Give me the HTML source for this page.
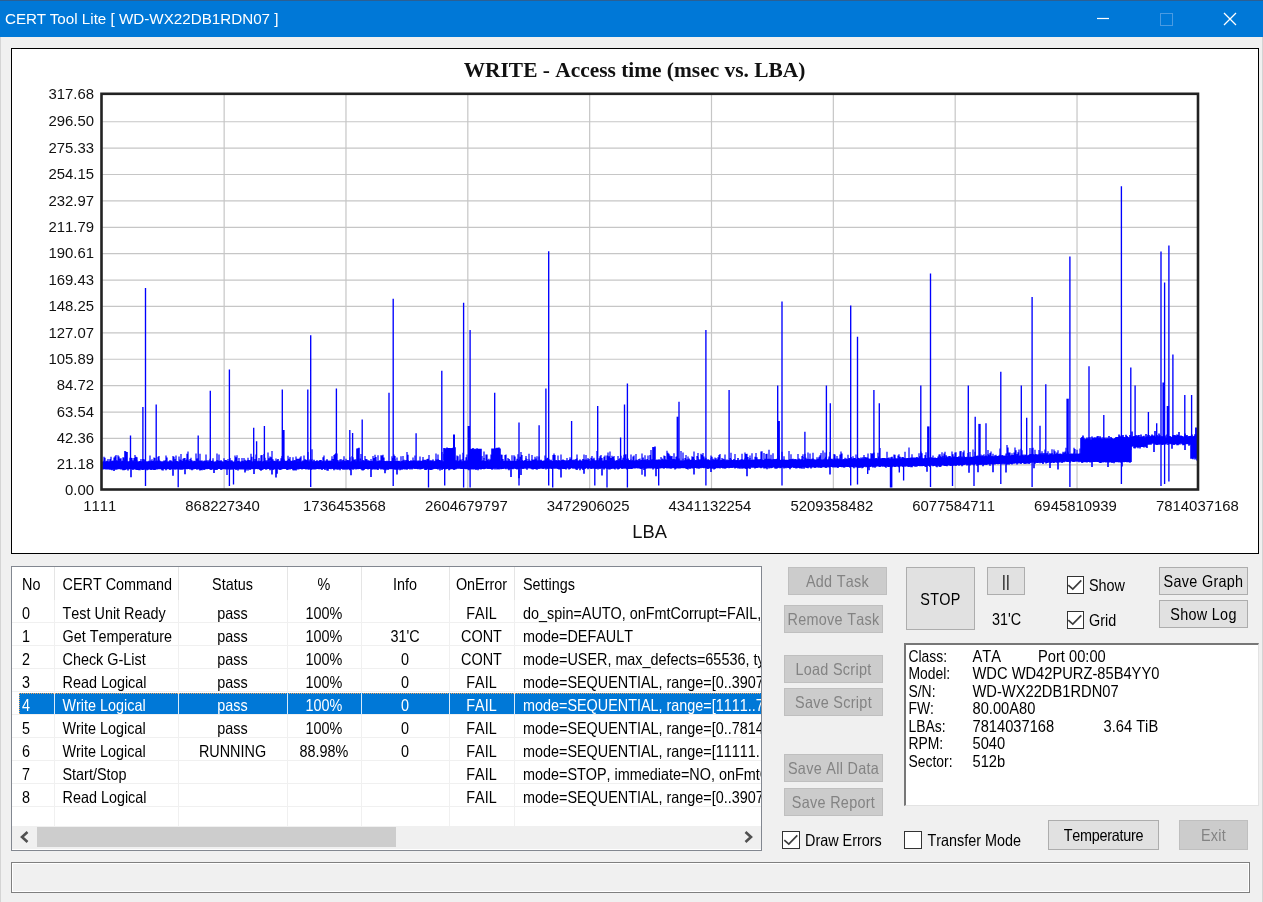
<!DOCTYPE html>
<html><head><meta charset="utf-8"><title>CERT Tool Lite</title>
<style>
html,body{margin:0;padding:0;}
body{width:1263px;height:902px;overflow:hidden;background:#f0f0f0;position:relative;font-family:"Liberation Sans",sans-serif;font-size:14.4px;color:#000;font-kerning:none;}
.abs{position:absolute;}
#titlebar{left:0;top:0;width:1263px;height:37px;background:#0078d7;}
#topline{left:0;top:0;width:1263px;height:1px;background:#2b5f93;}
#title{left:5px;top:9px;color:#fff;font-size:15.2px;font-kerning:normal;white-space:nowrap;line-height:20px;}
#chartpanel{left:11px;top:48px;width:1246px;height:504px;background:#fff;border:1px solid #000;}
svg.chart{position:absolute;left:0;top:0;}
#tbl{left:11px;top:566px;width:749px;height:283px;background:#fff;border:1px solid #828790;overflow:hidden;}
#tbl .c{position:absolute;white-space:nowrap;line-height:16px;height:16px;transform:scaleY(1.13);}
#tbl .ctr{transform:translateX(-50%) scaleY(1.13);}
.vl{position:absolute;width:1px;background:#e5e5e5;}
.hl{position:absolute;height:1px;background:#f0f0f0;left:0;width:749px;}
.btn{position:absolute;box-sizing:border-box;border:1px solid #adadad;background:#e1e1e1;text-align:center;white-space:nowrap;}
.btn.dis{border-color:#bfbfbf;background:#cccccc;color:#838383;}
.cb{position:absolute;box-sizing:border-box;width:17.7px;height:17.7px;border:1.3px solid #333;background:#fff;}
.lbl{position:absolute;white-space:nowrap;line-height:16px;transform:scaleY(1.13);}
.btn span{display:inline-block;transform:scaleY(1.13);letter-spacing:0.3px;}
#info{left:904.3px;top:642.5px;width:354.4px;height:163.8px;background:#fff;border-top:2.5px solid #777;border-left:2.5px solid #777;border-right:1px solid #e3e3e3;border-bottom:1px solid #e3e3e3;box-sizing:border-box;}
#info div{position:absolute;white-space:nowrap;line-height:16px;font-size:14.7px;transform:scaleY(1.13);transform-origin:0 50%;}
#status{left:11px;top:862px;width:1239px;height:31px;box-sizing:border-box;border:1px solid #7f7f7f;box-shadow:inset 0 0 0 1px #fff;background:#f0f0f0;}
.edge{position:absolute;top:37px;width:1px;height:865px;background:#d4d4d4;}
</style></head><body>
<div id="wrap" style="position:absolute;left:0;top:0;width:1263px;height:902px;will-change:transform;"><div id="titlebar" class="abs"></div><div id="topline" class="abs"></div>
<div id="title" class="abs">CERT Tool Lite [ WD-WX22DB1RDN07 ]</div>
<svg class="abs" style="left:1090px;top:8px" width="160" height="24" viewBox="0 0 160 24">
<path d="M7 10.5H19" stroke="#fff" stroke-width="1.2" fill="none"/>
<rect x="70.5" y="5.5" width="12" height="12" stroke="#4a9be2" stroke-width="1" fill="none"/>
<path d="M134 5L146 17M146 5L134 17" stroke="#fff" stroke-width="1.3" fill="none"/>
</svg>
<div id="chartpanel" class="abs"></div>
<svg class="chart" width="1263" height="902" viewBox="0 0 1263 902">
<path d="M224.14 93.8V489.5M345.98 93.8V489.5M467.82 93.8V489.5M589.66 93.8V489.5M711.50 93.8V489.5M833.34 93.8V489.5M955.18 93.8V489.5M1077.02 93.8V489.5M101.5 121.74H1198.0M101.5 148.13H1198.0M101.5 174.52H1198.0M101.5 200.91H1198.0M101.5 227.30H1198.0M101.5 253.69H1198.0M101.5 280.08H1198.0M101.5 306.47H1198.0M101.5 332.86H1198.0M101.5 359.25H1198.0M101.5 385.64H1198.0M101.5 412.03H1198.0M101.5 438.42H1198.0M101.5 464.81H1198.0" stroke="#c6c6c6" stroke-width="1.2" fill="none"/>
<g stroke="#0000ff" fill="none">
<path d="M103.0 461.4V469.5M104.0 460.8V469.2M105.0 461.3V469.2M106.0 461.2V469.4M107.0 460.8V469.4M108.0 461.2V469.5M109.0 461.4V469.5M110.0 460.8V469.7M111.0 461.2V469.8M112.0 461.1V470.3M113.0 460.6V469.5M114.0 461.0V471.0M115.0 461.0V469.7M116.0 459.9V469.7M117.0 460.7V469.5M118.0 460.2V469.2M119.0 459.8V469.1M120.0 460.6V469.2M121.0 461.6V469.4M122.0 460.7V469.4M123.0 460.8V470.3M124.0 459.8V470.2M125.0 451.0V469.9M126.0 451.8V469.4M127.0 452.1V469.2M128.0 461.3V470.5M129.0 461.3V469.3M130.0 461.0V469.3M131.0 461.1V477.3M132.0 461.2V469.3M133.0 460.3V470.0M134.0 461.2V469.1M135.0 461.4V469.4M136.0 460.9V469.8M137.0 460.6V469.9M138.0 461.5V469.9M139.0 461.3V470.3M140.0 461.0V470.3M141.0 460.7V469.1M142.0 461.6V470.1M143.0 458.9V469.9M144.0 461.5V469.5M145.0 460.1V469.8M146.0 461.5V469.3M147.0 461.3V470.2M148.0 461.4V469.7M149.0 460.8V469.5M150.0 461.4V469.4M151.0 460.5V470.1M152.0 460.9V469.8M153.0 460.9V469.7M154.0 460.3V470.0M155.0 461.6V470.0M156.0 460.8V469.4M157.0 460.8V469.4M158.0 460.4V469.2M159.0 459.8V469.1M160.0 460.8V469.2M161.0 461.5V469.3M162.0 461.3V470.2M163.0 461.5V470.6M164.0 460.4V469.1M165.0 460.5V469.2M166.0 459.9V470.2M167.0 461.3V469.3M168.0 461.6V469.3M169.0 461.2V469.3M170.0 460.3V470.1M171.0 460.6V469.2M172.0 461.3V469.4M173.0 461.3V475.7M174.0 461.4V469.1M175.0 458.9V469.8M176.0 461.0V469.3M177.0 460.9V469.5M178.0 461.6V469.4M179.0 461.5V469.3M180.0 459.5V469.7M181.0 459.9V469.7M182.0 460.9V469.8M183.0 460.8V469.6M184.0 461.0V469.1M185.0 461.3V474.3M186.0 460.0V469.1M187.0 459.3V469.3M188.0 459.7V469.0M189.0 460.7V469.1M190.0 460.9V469.5M191.0 460.1V469.5M192.0 460.5V470.2M193.0 461.5V469.6M194.0 460.8V469.2M195.0 460.9V469.1M196.0 461.6V469.0M197.0 461.2V469.8M198.0 461.3V469.1M199.0 460.5V469.4M200.0 461.1V470.4M201.0 460.6V469.9M202.0 460.5V470.2M203.0 461.4V469.3M204.0 460.7V470.1M205.0 460.4V469.6M206.0 461.0V469.0M207.0 460.3V469.3M208.0 461.5V469.0M209.0 460.3V469.0M210.0 461.5V469.5M211.0 461.1V470.1M212.0 460.7V469.5M213.0 460.5V469.6M214.0 461.5V472.9M215.0 461.4V470.0M216.0 461.3V469.8M217.0 460.0V470.0M218.0 460.5V469.0M219.0 460.8V469.1M220.0 461.1V469.1M221.0 460.3V469.9M222.0 461.3V469.4M223.0 461.5V469.0M224.0 461.4V469.3M225.0 459.9V469.0M226.0 460.1V469.4M227.0 460.8V469.4M228.0 460.9V469.5M229.0 461.1V469.4M230.0 461.4V469.8M231.0 460.2V469.8M232.0 460.4V469.3M233.0 461.4V469.7M234.0 461.5V469.2M235.0 460.6V469.0M236.0 461.4V470.0M237.0 461.2V469.3M238.0 461.1V470.4M239.0 461.1V469.3M240.0 461.5V469.5M241.0 461.5V469.6M242.0 460.9V469.4M243.0 460.7V469.5M244.0 461.4V469.5M245.0 459.7V472.5M246.0 461.0V470.4M247.0 460.5V468.9M248.0 459.9V470.4M249.0 460.0V469.1M250.0 460.5V469.9M251.0 459.8V469.2M252.0 461.3V469.3M253.0 461.2V469.1M254.0 461.0V474.0M255.0 459.1V469.3M256.0 460.8V469.0M257.0 461.4V469.0M258.0 460.8V469.2M259.0 461.5V469.1M260.0 460.9V470.1M261.0 460.8V470.7M262.0 461.2V470.1M263.0 461.2V469.4M264.0 461.0V469.0M265.0 461.3V469.1M266.0 460.3V469.7M267.0 461.2V469.3M268.0 460.0V469.1M269.0 461.5V468.9M270.0 459.6V470.2M271.0 461.0V469.6M272.0 460.9V474.6M273.0 460.8V470.0M274.0 460.8V469.1M275.0 461.1V469.4M276.0 461.4V477.5M277.0 460.3V473.8M278.0 459.0V469.2M279.0 461.5V469.6M280.0 460.7V470.0M281.0 461.3V469.8M282.0 461.4V469.2M283.0 461.2V468.9M284.0 459.4V469.1M285.0 461.1V469.0M286.0 460.8V469.0M287.0 460.7V469.9M288.0 460.1V469.8M289.0 461.4V469.3M290.0 460.5V469.5M291.0 460.7V468.9M292.0 461.0V468.9M293.0 460.3V470.2M294.0 460.5V470.6M295.0 460.1V469.9M296.0 461.0V470.5M297.0 461.3V469.5M298.0 460.3V469.4M299.0 461.2V469.3M300.0 461.1V468.9M301.0 461.2V469.1M302.0 461.3V469.4M303.0 460.6V469.1M304.0 460.5V468.9M305.0 459.3V468.9M306.0 459.7V469.6M307.0 460.2V468.9M308.0 460.3V469.4M309.0 461.2V469.7M310.0 459.6V468.9M311.0 459.8V470.0M312.0 459.3V469.4M313.0 461.2V469.2M314.0 459.8V469.6M315.0 461.2V469.5M316.0 460.9V469.2M317.0 460.2V469.1M318.0 461.2V469.1M319.0 460.8V469.3M320.0 460.1V469.3M321.0 460.1V469.0M322.0 461.3V470.0M323.0 461.0V468.9M324.0 460.3V469.1M325.0 461.2V470.0M326.0 460.4V468.8M327.0 459.3V470.6M328.0 460.4V470.7M329.0 460.9V469.0M330.0 460.6V469.1M331.0 460.8V469.2M332.0 459.2V468.8M333.0 461.3V469.0M334.0 460.5V470.2M335.0 460.0V469.0M336.0 459.6V469.5M337.0 460.0V469.6M338.0 460.3V469.7M339.0 461.4V469.0M340.0 459.6V470.3M341.0 461.4V468.8M342.0 460.3V469.1M343.0 461.2V469.8M344.0 460.7V469.2M345.0 461.0V469.7M346.0 460.7V469.0M347.0 460.2V469.7M348.0 460.0V468.9M349.0 460.7V469.4M350.0 461.4V470.3M351.0 461.4V475.3M352.0 460.9V468.9M353.0 460.2V469.8M354.0 459.4V469.2M355.0 459.5V468.8M356.0 461.3V469.5M357.0 448.4V468.9M358.0 448.3V469.3M359.0 447.7V468.9M360.0 461.2V468.9M361.0 459.8V469.2M362.0 461.2V470.3M363.0 460.0V470.4M364.0 460.7V470.1M365.0 460.6V469.0M366.0 460.9V469.0M367.0 461.1V469.1M368.0 460.3V469.6M369.0 460.6V469.1M370.0 461.1V468.9M371.0 460.9V477.0M372.0 460.8V469.7M373.0 461.3V469.1M374.0 460.9V469.4M375.0 461.2V469.4M376.0 460.5V469.5M377.0 461.2V469.4M378.0 460.9V470.1M379.0 460.7V468.8M380.0 460.2V468.8M381.0 460.9V469.5M382.0 460.6V468.9M383.0 460.3V469.4M384.0 461.0V469.7M385.0 461.0V473.2M386.0 461.2V470.2M387.0 460.8V469.1M388.0 461.3V469.9M389.0 461.1V469.1M390.0 461.3V469.2M391.0 460.9V468.9M392.0 461.3V469.2M393.0 461.0V469.1M394.0 460.9V469.3M395.0 459.3V469.8M396.0 460.9V469.8M397.0 461.0V474.4M398.0 460.9V469.8M399.0 460.8V468.8M400.0 461.2V470.3M401.0 461.3V469.5M402.0 461.1V469.8M403.0 460.6V469.3M404.0 459.8V469.3M405.0 461.3V469.5M406.0 460.1V469.3M407.0 460.3V469.7M408.0 460.1V468.9M409.0 460.9V468.8M410.0 461.1V469.5M411.0 460.3V468.8M412.0 460.9V469.4M413.0 460.4V468.8M414.0 460.3V468.8M415.0 460.8V469.1M416.0 460.6V468.8M417.0 461.2V469.1M418.0 460.6V469.3M419.0 460.4V468.8M420.0 460.8V469.4M421.0 460.8V469.3M422.0 460.8V469.1M423.0 459.7V468.7M424.0 460.2V468.8M425.0 459.8V469.9M426.0 460.3V470.0M427.0 460.6V469.6M428.0 460.9V469.1M429.0 461.1V469.3M430.0 460.2V470.0M431.0 460.2V470.0M432.0 460.8V469.7M433.0 459.4V469.2M434.0 461.2V469.1M435.0 460.7V468.8M436.0 459.3V469.0M437.0 459.9V469.1M438.0 459.1V469.5M439.0 459.9V468.8M440.0 459.9V470.4M441.0 461.1V468.8M442.0 460.2V469.9M443.0 461.2V469.1M444.0 447.9V469.1M445.0 448.3V469.5M446.0 448.2V469.2M447.0 447.4V468.9M448.0 448.1V468.7M449.0 448.1V470.2M450.0 448.1V469.6M451.0 448.2V469.0M452.0 448.0V469.2M453.0 447.8V469.3M454.0 447.4V469.9M455.0 447.3V469.5M456.0 460.2V469.3M457.0 460.2V468.8M458.0 461.2V468.8M459.0 460.8V468.7M460.0 459.7V468.8M461.0 459.6V469.0M462.0 461.2V468.9M463.0 459.0V469.0M464.0 461.1V468.7M465.0 460.5V468.9M466.0 460.5V469.3M467.0 459.8V469.0M468.0 460.4V469.4M469.0 460.7V470.3M470.0 449.1V468.9M471.0 448.8V469.5M472.0 448.9V469.3M473.0 448.1V469.5M474.0 449.2V469.4M475.0 448.8V469.0M476.0 449.2V470.0M477.0 448.3V468.9M478.0 448.7V470.2M479.0 448.7V469.1M480.0 448.8V469.3M481.0 448.8V469.5M482.0 461.0V469.0M483.0 460.3V468.9M484.0 457.9V469.3M485.0 461.1V469.0M486.0 461.0V468.6M487.0 459.9V468.7M488.0 459.6V469.0M489.0 461.2V468.8M490.0 460.0V468.9M491.0 459.1V469.1M492.0 448.5V469.8M493.0 448.6V469.2M494.0 448.5V468.6M495.0 448.2V469.4M496.0 448.2V468.6M497.0 447.8V469.5M498.0 447.7V469.0M499.0 447.4V469.4M500.0 448.5V468.8M501.0 460.5V469.2M502.0 460.4V469.1M503.0 460.8V468.9M504.0 460.7V468.7M505.0 460.7V468.8M506.0 460.6V469.3M507.0 460.8V468.6M508.0 460.9V469.3M509.0 459.1V470.2M510.0 460.5V468.9M511.0 461.0V477.0M512.0 460.9V468.9M513.0 460.7V469.2M514.0 460.7V468.7M515.0 461.0V468.8M516.0 461.0V469.0M517.0 460.6V469.4M518.0 459.8V469.1M519.0 460.0V478.2M520.0 459.1V468.7M521.0 460.7V474.9M522.0 460.0V468.8M523.0 460.5V469.0M524.0 461.1V468.8M525.0 459.9V468.5M526.0 458.5V468.7M527.0 461.1V469.8M528.0 461.0V468.6M529.0 459.5V468.6M530.0 460.6V468.6M531.0 461.0V468.8M532.0 459.4V469.2M533.0 460.1V469.6M534.0 459.4V469.1M535.0 459.4V468.9M536.0 458.5V469.2M537.0 460.3V469.7M538.0 460.4V468.7M539.0 460.2V469.1M540.0 460.5V468.5M541.0 459.7V468.8M542.0 460.8V468.6M543.0 460.7V468.9M544.0 460.5V468.8M545.0 460.2V468.6M546.0 458.9V469.4M547.0 459.8V468.6M548.0 460.7V469.1M549.0 459.2V468.8M550.0 460.6V468.8M551.0 459.7V468.7M552.0 461.0V468.9M553.0 460.9V468.4M554.0 459.9V468.7M555.0 460.9V468.8M556.0 460.1V468.6M557.0 460.4V468.7M558.0 460.5V468.9M559.0 459.9V469.4M560.0 460.9V469.5M561.0 460.4V477.5M562.0 459.9V468.8M563.0 459.4V469.0M564.0 460.1V468.9M565.0 460.7V469.0M566.0 460.2V469.4M567.0 460.3V468.5M568.0 460.6V468.5M569.0 459.9V469.4M570.0 459.0V469.0M571.0 458.7V468.3M572.0 459.7V468.3M573.0 460.2V468.7M574.0 459.5V468.6M575.0 460.2V468.8M576.0 459.0V469.5M577.0 458.5V469.9M578.0 460.5V468.8M579.0 460.4V468.3M580.0 459.6V470.2M581.0 460.4V468.8M582.0 460.6V468.7M583.0 458.9V470.0M584.0 459.4V473.7M585.0 460.1V469.0M586.0 459.6V468.3M587.0 459.5V468.3M588.0 459.9V469.2M589.0 459.0V468.4M590.0 460.7V468.3M591.0 460.6V468.9M592.0 459.7V468.8M593.0 458.8V468.7M594.0 459.5V468.6M595.0 460.3V468.7M596.0 460.4V469.1M597.0 460.1V468.4M598.0 460.1V469.5M599.0 460.8V468.6M600.0 460.5V469.1M601.0 460.5V468.3M602.0 460.8V475.6M603.0 460.5V468.5M604.0 460.6V469.5M605.0 460.6V468.6M606.0 460.1V468.3M607.0 460.6V468.9M608.0 459.7V468.7M609.0 460.3V469.5M610.0 460.5V469.4M611.0 460.4V468.8M612.0 460.1V469.1M613.0 459.9V468.1M614.0 459.6V468.9M615.0 460.4V469.6M616.0 460.7V468.3M617.0 460.1V468.7M618.0 460.7V469.5M619.0 459.1V469.1M620.0 460.4V468.2M621.0 460.5V468.3M622.0 460.0V468.9M623.0 459.3V468.5M624.0 460.6V468.7M625.0 460.0V468.3M626.0 459.3V468.7M627.0 460.7V469.4M628.0 458.6V468.8M629.0 460.0V468.9M630.0 460.3V468.8M631.0 459.5V468.9M632.0 460.6V469.0M633.0 459.9V468.2M634.0 460.4V468.6M635.0 460.6V468.6M636.0 459.8V468.3M637.0 459.8V468.3M638.0 460.6V468.5M639.0 459.0V468.3M640.0 460.4V468.7M641.0 460.1V469.1M642.0 460.1V468.7M643.0 457.5V468.2M644.0 460.0V469.9M645.0 459.6V476.6M646.0 459.8V468.8M647.0 460.6V468.5M648.0 460.2V468.5M649.0 460.1V468.2M650.0 460.6V468.6M651.0 459.7V468.6M652.0 459.3V468.2M653.0 447.0V469.4M654.0 447.2V468.5M655.0 446.4V468.6M656.0 460.0V476.2M657.0 459.5V468.9M658.0 459.9V468.7M659.0 459.2V468.4M660.0 460.1V468.5M661.0 460.2V468.3M662.0 458.4V468.2M663.0 459.2V468.2M664.0 459.9V468.8M665.0 459.1V468.1M666.0 459.9V468.0M667.0 459.3V468.5M668.0 459.3V468.1M669.0 459.6V468.5M670.0 459.5V468.4M671.0 460.3V468.8M672.0 459.6V468.3M673.0 459.0V468.3M674.0 458.9V468.0M675.0 459.3V469.5M676.0 459.4V468.8M677.0 459.2V468.0M678.0 458.6V468.5M679.0 458.4V468.5M680.0 460.5V468.5M681.0 460.2V468.2M682.0 460.4V468.1M683.0 458.7V468.2M684.0 460.4V468.3M685.0 460.0V468.0M686.0 460.0V468.7M687.0 459.2V469.0M688.0 459.6V469.4M689.0 458.4V467.9M690.0 459.7V469.0M691.0 459.9V467.9M692.0 459.5V468.5M693.0 459.4V468.4M694.0 459.1V474.5M695.0 460.3V467.9M696.0 459.9V467.9M697.0 460.2V468.6M698.0 457.4V468.4M699.0 459.2V468.7M700.0 459.9V468.2M701.0 459.0V468.2M702.0 459.0V467.8M703.0 459.5V468.0M704.0 459.9V468.2M705.0 458.4V467.8M706.0 459.6V468.0M707.0 459.8V468.8M708.0 459.2V469.1M709.0 459.8V468.6M710.0 460.2V468.5M711.0 458.2V471.9M712.0 460.2V468.8M713.0 458.8V468.6M714.0 460.1V469.5M715.0 459.6V469.1M716.0 458.3V468.1M717.0 460.1V468.3M718.0 459.1V468.3M719.0 459.0V468.0M720.0 460.3V468.5M721.0 460.0V467.7M722.0 460.1V468.0M723.0 458.8V468.4M724.0 459.2V468.2M725.0 459.5V468.7M726.0 460.2V468.3M727.0 459.5V467.9M728.0 460.2V467.8M729.0 460.1V468.3M730.0 460.3V468.0M731.0 459.0V467.7M732.0 459.9V468.0M733.0 460.1V467.8M734.0 459.1V467.8M735.0 459.9V468.4M736.0 460.2V467.9M737.0 460.0V467.8M738.0 458.1V468.5M739.0 460.2V468.2M740.0 459.8V468.8M741.0 459.5V467.7M742.0 458.9V468.7M743.0 460.0V468.2M744.0 459.4V468.5M745.0 458.4V468.3M746.0 459.8V469.0M747.0 460.1V476.2M748.0 459.3V468.5M749.0 459.4V467.9M750.0 458.1V468.9M751.0 460.1V467.8M752.0 459.8V467.7M753.0 459.8V467.8M754.0 459.6V467.8M755.0 460.1V468.4M756.0 459.4V467.9M757.0 460.1V468.1M758.0 459.0V467.8M759.0 460.1V467.6M760.0 458.9V467.8M761.0 459.0V468.3M762.0 459.2V467.7M763.0 460.0V467.5M764.0 460.1V468.5M765.0 458.7V468.4M766.0 458.7V467.9M767.0 459.1V469.2M768.0 458.8V467.6M769.0 459.0V468.4M770.0 458.8V467.7M771.0 459.3V468.2M772.0 459.2V467.9M773.0 459.4V467.6M774.0 458.9V467.6M775.0 459.2V468.6M776.0 459.1V468.8M777.0 458.7V468.4M778.0 459.7V467.9M779.0 459.0V467.6M780.0 459.7V468.2M781.0 460.0V467.9M782.0 459.3V467.5M783.0 459.4V467.5M784.0 459.4V468.5M785.0 459.8V467.7M786.0 459.7V468.2M787.0 459.8V467.6M788.0 459.9V468.0M789.0 459.7V468.0M790.0 459.1V469.2M791.0 459.6V468.0M792.0 458.9V467.6M793.0 458.7V467.6M794.0 459.5V468.0M795.0 458.9V467.7M796.0 459.2V468.4M797.0 459.5V468.2M798.0 459.5V467.7M799.0 458.6V468.0M800.0 459.3V468.4M801.0 459.6V468.1M802.0 459.1V468.7M803.0 457.0V467.4M804.0 459.9V468.7M805.0 459.6V467.4M806.0 459.4V467.7M807.0 459.1V467.9M808.0 458.7V468.2M809.0 459.0V467.5M810.0 459.0V467.5M811.0 459.4V468.5M812.0 458.8V467.5M813.0 458.5V467.6M814.0 459.3V467.5M815.0 459.4V468.0M816.0 459.6V467.6M817.0 459.2V467.4M818.0 458.8V467.4M819.0 458.5V467.7M820.0 457.9V467.5M821.0 459.2V467.9M822.0 459.4V467.4M823.0 459.5V467.2M824.0 459.2V467.2M825.0 458.3V467.5M826.0 456.7V468.1M827.0 459.4V467.6M828.0 459.2V467.1M829.0 458.6V467.5M830.0 458.1V474.4M831.0 458.7V467.1M832.0 458.7V467.1M833.0 459.5V467.4M834.0 458.4V467.3M835.0 458.6V467.4M836.0 459.2V467.2M837.0 458.4V467.6M838.0 458.5V468.0M839.0 459.2V467.1M840.0 458.2V466.9M841.0 458.3V467.0M842.0 459.3V467.2M843.0 459.3V466.9M844.0 459.1V467.7M845.0 459.4V467.2M846.0 458.5V466.8M847.0 458.7V467.0M848.0 459.2V467.0M849.0 458.0V467.0M850.0 458.3V467.8M851.0 456.9V466.8M852.0 458.6V466.9M853.0 458.7V467.2M854.0 457.9V468.3M855.0 458.1V466.7M856.0 459.2V467.6M857.0 459.1V466.9M858.0 457.8V468.1M859.0 457.9V467.6M860.0 459.1V467.9M861.0 457.4V467.1M862.0 458.4V468.2M863.0 457.2V467.7M864.0 458.7V466.9M865.0 456.9V466.6M866.0 457.7V467.2M867.0 457.3V466.9M868.0 458.0V467.5M869.0 459.0V470.2M870.0 458.6V467.1M871.0 458.7V466.8M872.0 458.9V466.7M873.0 458.0V467.5M874.0 458.7V466.8M875.0 458.6V467.8M876.0 458.0V466.8M877.0 458.3V466.4M878.0 458.9V466.3M879.0 458.6V466.8M880.0 458.1V466.9M881.0 458.7V466.5M882.0 457.9V466.4M883.0 458.0V466.8M884.0 457.9V466.2M885.0 458.0V467.1M886.0 458.8V467.7M887.0 457.9V466.3M888.0 457.9V466.9M889.0 457.5V466.9M890.0 458.7V466.7M891.0 457.3V466.3M892.0 456.8V467.3M893.0 458.6V466.5M894.0 458.4V466.7M895.0 457.8V467.0M896.0 458.4V466.7M897.0 458.3V466.6M898.0 458.2V466.7M899.0 456.7V467.2M900.0 456.8V466.4M901.0 458.4V466.4M902.0 457.2V466.3M903.0 457.1V467.1M904.0 458.0V466.3M905.0 457.9V466.7M906.0 458.5V466.2M907.0 458.1V466.6M908.0 458.0V466.8M909.0 457.9V467.0M910.0 457.9V466.4M911.0 457.6V467.2M912.0 457.4V467.2M913.0 457.4V466.2M914.0 457.5V466.1M915.0 457.4V466.8M916.0 457.6V466.8M917.0 457.0V466.4M918.0 458.0V466.0M919.0 457.7V466.1M920.0 458.2V466.2M921.0 456.5V465.9M922.0 457.8V466.2M923.0 458.2V465.9M924.0 458.2V465.9M925.0 458.0V466.6M926.0 457.9V466.9M927.0 458.0V471.7M928.0 457.9V465.7M929.0 457.3V466.0M930.0 457.9V467.0M931.0 457.3V465.7M932.0 457.6V465.6M933.0 457.9V466.3M934.0 458.0V466.0M935.0 457.5V465.7M936.0 458.0V466.4M937.0 458.0V467.2M938.0 458.0V465.7M939.0 457.8V466.4M940.0 456.0V467.0M941.0 456.7V466.6M942.0 457.6V465.6M943.0 455.8V465.5M944.0 457.8V465.7M945.0 457.8V465.9M946.0 455.3V466.0M947.0 456.6V466.2M948.0 457.2V465.4M949.0 456.0V465.4M950.0 455.9V465.7M951.0 457.2V466.1M952.0 457.4V465.6M953.0 456.7V465.8M954.0 456.6V465.7M955.0 456.3V465.6M956.0 457.0V466.1M957.0 457.1V465.1M958.0 457.0V465.2M959.0 456.2V465.8M960.0 457.6V465.2M961.0 457.2V465.0M962.0 456.4V466.3M963.0 457.4V465.3M964.0 455.9V465.0M965.0 456.9V464.8M966.0 457.3V464.8M967.0 456.8V465.5M968.0 457.2V465.0M969.0 457.2V472.7M970.0 456.8V465.4M971.0 456.8V464.8M972.0 456.9V464.8M973.0 456.9V464.8M974.0 456.3V465.3M975.0 456.7V464.5M976.0 456.0V464.6M977.0 455.7V465.7M978.0 455.4V472.2M979.0 456.3V465.0M980.0 455.9V464.6M981.0 456.6V464.9M982.0 455.4V464.4M983.0 455.2V466.2M984.0 456.8V464.9M985.0 456.0V464.5M986.0 455.4V464.9M987.0 456.3V464.7M988.0 454.2V464.5M989.0 454.4V464.4M990.0 455.7V465.7M991.0 456.5V464.1M992.0 456.1V464.6M993.0 456.5V472.2M994.0 456.3V464.4M995.0 455.2V464.4M996.0 456.3V464.1M997.0 456.1V464.1M998.0 456.1V464.3M999.0 455.6V464.1M1000.0 454.8V464.1M1001.0 456.1V463.8M1002.0 455.1V464.6M1003.0 455.6V463.6M1004.0 455.5V464.4M1005.0 455.9V463.8M1006.0 455.4V472.4M1007.0 454.3V464.8M1008.0 455.9V464.0M1009.0 456.0V464.7M1010.0 455.9V463.8M1011.0 455.2V464.0M1012.0 454.9V464.5M1013.0 455.1V463.8M1014.0 455.0V463.8M1015.0 455.5V463.4M1016.0 455.4V463.3M1017.0 454.0V464.5M1018.0 454.6V463.4M1019.0 455.6V463.4M1020.0 455.6V463.3M1021.0 455.2V464.0M1022.0 455.0V463.0M1023.0 454.4V463.1M1024.0 455.4V463.8M1025.0 454.4V463.9M1026.0 454.9V463.4M1027.0 455.2V463.8M1028.0 455.3V463.0M1029.0 454.8V463.9M1030.0 454.1V463.3M1031.0 454.1V462.8M1032.0 453.9V462.7M1033.0 454.1V462.6M1034.0 454.4V468.2M1035.0 454.2V463.7M1036.0 453.9V462.8M1037.0 455.1V462.9M1038.0 454.3V463.1M1039.0 454.4V462.6M1040.0 453.3V463.2M1041.0 454.2V462.5M1042.0 452.9V462.9M1043.0 454.3V464.1M1044.0 453.0V462.5M1045.0 454.4V462.3M1046.0 454.2V463.6M1047.0 452.9V462.9M1048.0 454.5V462.7M1049.0 454.6V462.4M1050.0 453.2V468.1M1051.0 454.0V463.1M1052.0 452.9V462.4M1053.0 454.3V462.7M1054.0 454.4V463.1M1055.0 454.0V462.3M1056.0 453.8V462.4M1057.0 452.4V462.7M1058.0 454.1V469.6M1059.0 453.9V462.4M1060.0 453.6V462.6M1061.0 453.7V461.8M1062.0 454.2V463.0M1063.0 453.3V462.3M1064.0 454.1V462.2M1065.0 454.2V461.7M1066.0 454.0V461.6M1067.0 453.6V462.1M1068.0 453.1V461.9M1069.0 453.9V461.8M1070.0 453.9V462.7M1071.0 453.4V461.5M1072.0 453.4V461.5M1073.0 453.8V461.9M1074.0 452.8V461.9M1075.0 453.7V461.8M1076.0 453.5V461.6M1077.0 453.4V461.7M1078.0 453.9V461.5M1079.0 453.5V462.3M1080.0 453.3V461.6M1081.0 438.0V462.1M1082.0 437.1V463.0M1083.0 435.5V462.5M1084.0 437.8V461.9M1085.0 439.3V462.2M1086.0 438.4V462.2M1087.0 437.4V462.4M1088.0 438.4V462.0M1089.0 437.3V462.1M1090.0 437.2V462.6M1091.0 439.5V462.3M1092.0 436.4V466.9M1093.0 438.0V461.9M1094.0 437.5V462.0M1095.0 437.2V461.9M1096.0 437.9V461.8M1097.0 436.4V462.0M1098.0 435.9V462.0M1099.0 437.7V462.3M1100.0 436.2V463.1M1101.0 437.5V462.9M1102.0 438.8V462.0M1103.0 437.3V462.6M1104.0 438.0V461.9M1105.0 437.6V462.2M1106.0 438.7V462.6M1107.0 437.6V462.3M1108.0 438.4V467.0M1109.0 436.1V462.5M1110.0 438.6V462.6M1111.0 437.0V462.1M1112.0 437.9V462.9M1113.0 438.7V462.3M1114.0 438.5V463.2M1115.0 437.9V462.2M1116.0 436.9V462.0M1117.0 437.0V462.2M1118.0 437.0V462.0M1119.0 434.5V462.5M1120.0 435.7V462.0M1121.0 437.0V462.8M1122.0 436.6V466.4M1123.0 435.1V462.0M1124.0 436.9V462.3M1125.0 437.3V461.9M1126.0 434.7V462.0M1127.0 435.9V462.3M1128.0 437.1V462.3M1129.0 437.6V462.3M1130.0 435.1V462.8M1131.0 436.8V461.9M1132.0 431.5V446.7M1133.0 436.4V446.3M1134.0 436.0V448.3M1135.0 436.1V448.5M1136.0 435.1V447.5M1137.0 436.3V447.1M1138.0 435.2V448.2M1139.0 434.9V447.1M1140.0 437.0V448.5M1141.0 434.5V446.9M1142.0 436.7V446.9M1143.0 436.3V446.9M1144.0 435.8V447.4M1145.0 437.2V446.5M1146.0 433.9V447.2M1147.0 436.5V448.0M1148.0 434.8V444.7M1149.0 435.0V444.7M1150.0 436.5V444.4M1151.0 435.8V444.8M1152.0 434.4V443.7M1153.0 435.6V443.6M1154.0 435.6V452.1M1155.0 431.1V444.5M1156.0 436.4V444.8M1157.0 435.1V445.1M1158.0 436.2V444.8M1159.0 433.5V444.7M1160.0 435.3V444.4M1161.0 436.7V444.3M1162.0 436.1V445.0M1163.0 436.9V444.7M1164.0 435.3V444.8M1165.0 435.4V444.6M1166.0 437.4V444.4M1167.0 434.6V443.6M1168.0 435.5V445.0M1169.0 436.2V444.3M1170.0 436.1V443.8M1171.0 436.8V444.2M1172.0 437.1V448.7M1173.0 434.9V444.5M1174.0 435.2V444.9M1175.0 435.1V444.5M1176.0 435.9V444.0M1177.0 434.6V445.2M1178.0 435.1V445.2M1179.0 431.9V444.4M1180.0 435.8V444.6M1181.0 435.5V443.3M1182.0 436.1V444.3M1183.0 436.3V445.2M1184.0 437.2V445.0M1185.0 433.6V449.9M1186.0 435.5V444.2M1187.0 434.9V443.9M1188.0 436.6V444.3M1189.0 436.0V445.7M1190.0 436.0V444.7M1191.0 435.8V458.7M1192.0 434.6V458.7M1193.0 436.6V459.2M1194.0 436.1V457.7M1195.0 434.2V459.6M1196.0 435.2V458.5M1197.0 434.3V460.5" stroke-width="1.6"/>
<path d="M104.0 461.3V456.7M105.0 461.8V457.7M108.0 461.7V459.1M110.0 461.3V459.0M111.0 461.7V456.8M114.0 461.5V457.4M115.0 461.5V456.2M116.0 460.4V454.9M118.0 460.7V455.2M119.0 460.3V456.4M120.0 461.1V458.5M121.0 462.1V458.2M123.0 461.3V457.3M124.0 460.3V457.4M130.0 461.5V457.8M131.0 461.6V457.8M132.0 461.7V458.0M134.0 461.7V458.0M135.0 461.9V455.1M136.0 461.4V456.8M137.0 461.1V457.3M141.0 461.2V459.1M144.0 462.0V459.0M150.0 461.9V455.4M152.0 461.4V459.3M154.0 460.8V457.6M155.0 462.1V458.0M158.0 460.9V456.7M159.0 460.3V456.0M166.0 460.4V455.6M167.0 461.8V457.6M173.0 461.8V456.1M174.0 461.9V456.8M176.0 461.5V455.6M179.0 462.0V456.5M181.0 460.4V454.1M183.0 461.3V458.7M184.0 461.5V457.9M185.0 461.8V458.1M187.0 459.8V453.7M188.0 460.2V451.4M190.0 461.4V459.1M191.0 460.6V457.8M196.0 462.1V453.4M197.0 461.7V458.4M198.0 461.8V458.3M200.0 461.6V453.7M206.0 461.5V454.6M210.0 462.0V458.7M213.0 461.0V458.3M217.0 460.5V453.6M219.0 461.3V454.6M224.0 461.9V458.3M228.0 461.4V459.1M230.0 461.9V458.1M235.0 461.1V455.4M236.0 461.9V457.2M237.0 461.7V455.2M239.0 461.6V457.9M242.0 461.4V458.0M244.0 461.9V457.9M248.0 460.4V457.8M251.0 460.3V453.7M252.0 461.8V456.7M256.0 461.3V454.5M259.0 462.0V457.9M261.0 461.3V455.2M262.0 461.7V454.9M264.0 461.5V454.0M265.0 461.8V457.8M268.0 460.5V452.4M269.0 462.0V458.2M270.0 460.1V456.4M271.0 461.5V457.2M272.0 461.4V450.9M273.0 461.3V459.2M276.0 461.9V458.5M281.0 461.8V458.2M282.0 461.9V456.1M288.0 460.6V455.7M289.0 461.9V458.7M290.0 461.0V457.0M293.0 460.8V457.3M296.0 461.5V456.6M297.0 461.8V458.7M298.0 460.8V458.7M299.0 461.7V458.7M300.0 461.6V457.6M301.0 461.7V456.2M304.0 461.0V455.4M308.0 460.8V452.0M312.0 459.8V449.2M323.0 461.5V457.3M324.0 460.8V455.6M332.0 459.7V456.3M333.0 461.8V459.0M334.0 461.0V455.1M335.0 460.5V454.1M336.0 460.1V453.1M337.0 460.5V453.5M341.0 461.9V459.1M343.0 461.7V459.7M344.0 461.2V456.2M346.0 461.2V458.7M350.0 461.9V457.2M352.0 461.4V456.3M353.0 460.7V457.2M356.0 461.8V459.3M360.0 461.7V458.6M361.0 460.3V453.9M365.0 461.1V456.0M366.0 461.4V458.9M367.0 461.6V459.3M371.0 461.4V458.9M373.0 461.8V456.0M374.0 461.4V458.1M375.0 461.7V454.8M376.0 461.0V457.0M378.0 461.4V455.3M381.0 461.4V455.2M382.0 461.1V455.6M383.0 460.8V454.8M384.0 461.5V457.5M392.0 461.8V456.3M393.0 461.5V457.9M394.0 461.4V454.5M395.0 459.8V455.9M397.0 461.5V457.6M401.0 461.8V456.2M403.0 461.1V456.0M407.0 460.8V452.1M408.0 460.6V454.7M413.0 460.9V457.5M415.0 461.3V455.6M420.0 461.3V456.6M423.0 460.2V457.0M427.0 461.1V459.0M428.0 461.4V458.7M429.0 461.6V455.1M436.0 459.8V453.6M438.0 459.6V454.4M442.0 460.7V452.1M444.0 460.0V453.9M446.0 461.3V456.4M448.0 461.7V455.1M451.0 460.1V457.2M452.0 460.5V450.3M454.0 460.3V455.5M457.0 460.7V455.5M458.0 461.7V456.2M460.0 460.2V454.5M463.0 459.5V452.7M466.0 461.0V457.2M467.0 460.3V454.4M478.0 461.7V456.7M482.0 461.5V456.0M484.0 458.4V451.5M486.0 461.5V454.6M487.0 460.4V454.5M489.0 461.7V458.8M491.0 459.6V454.6M492.0 459.9V455.0M494.0 461.0V457.7M495.0 460.1V454.2M496.0 461.4V455.6M499.0 460.8V455.2M501.0 461.0V454.4M502.0 460.9V454.8M503.0 461.3V459.0M505.0 461.2V455.0M506.0 461.1V454.6M508.0 461.4V458.1M512.0 461.4V455.2M514.0 461.2V455.3M515.0 461.5V456.5M517.0 461.1V458.8M518.0 460.3V454.2M520.0 459.6V456.7M521.0 461.2V452.0M522.0 460.5V454.9M526.0 459.0V456.1M527.0 461.6V459.1M529.0 460.0V453.7M532.0 459.9V455.0M535.0 459.9V456.7M537.0 460.8V456.2M539.0 460.7V456.6M545.0 460.7V455.5M547.0 460.3V457.7M548.0 461.2V458.0M553.0 461.4V455.0M554.0 460.4V453.5M555.0 461.4V455.0M558.0 461.0V455.6M561.0 460.9V454.5M567.0 460.8V458.1M570.0 459.5V457.2M577.0 459.0V454.4M584.0 459.9V454.4M586.0 460.1V454.9M588.0 460.4V457.9M591.0 461.1V457.8M592.0 460.2V456.0M594.0 460.0V457.8M597.0 460.6V450.9M599.0 461.3V458.3M600.0 461.0V456.3M601.0 461.0V454.9M602.0 461.3V458.1M604.0 461.1V456.8M605.0 461.1V455.5M607.0 461.1V455.6M608.0 460.2V452.6M609.0 460.8V456.2M610.0 461.0V451.6M611.0 460.9V458.0M612.0 460.6V455.8M613.0 460.4V456.9M614.0 460.1V456.1M618.0 461.2V456.1M620.0 460.9V458.0M621.0 461.0V455.8M623.0 459.8V457.8M624.0 461.1V454.8M625.0 460.5V454.5M626.0 459.8V454.3M627.0 461.2V458.7M631.0 460.0V454.5M633.0 460.4V456.6M634.0 460.9V455.4M636.0 460.3V453.9M640.0 460.9V458.6M642.0 460.6V453.4M645.0 460.1V455.3M647.0 461.1V459.0M648.0 460.7V455.5M650.0 461.1V454.9M651.0 460.2V450.0M661.0 460.7V457.1M664.0 460.4V455.6M665.0 459.6V455.9M667.0 459.8V450.7M668.0 459.8V452.7M669.0 460.1V453.7M670.0 460.0V455.6M671.0 460.8V456.3M672.0 460.1V455.9M674.0 459.4V453.3M676.0 459.9V456.7M677.0 459.7V456.2M681.0 460.7V450.9M683.0 459.2V452.6M685.0 460.5V458.0M686.0 460.5V455.0M688.0 460.1V456.4M692.0 460.0V456.3M693.0 459.9V457.0M694.0 459.6V451.5M697.0 460.7V455.9M698.0 457.9V453.1M701.0 459.5V453.7M702.0 459.5V454.7M703.0 460.0V453.1M704.0 460.4V456.6M706.0 460.1V457.8M711.0 458.7V455.4M712.0 460.7V456.7M715.0 460.1V457.4M718.0 459.6V457.3M719.0 459.5V455.0M720.0 460.8V454.1M722.0 460.6V457.9M725.0 460.0V454.4M730.0 460.8V458.1M731.0 459.5V452.8M735.0 460.4V453.9M742.0 459.4V453.7M745.0 458.9V452.5M746.0 460.3V454.0M747.0 460.6V453.8M748.0 459.8V456.9M750.0 458.6V455.5M752.0 460.3V453.3M755.0 460.6V456.8M756.0 459.9V453.0M757.0 460.6V457.3M761.0 459.5V451.6M762.0 459.7V451.3M764.0 460.6V453.0M766.0 459.2V453.9M767.0 459.6V453.8M769.0 459.5V449.8M771.0 459.8V454.7M773.0 459.9V453.3M778.0 460.2V456.4M779.0 459.5V455.5M782.0 459.8V451.8M784.0 459.9V456.3M789.0 460.2V451.1M791.0 460.1V454.3M798.0 460.0V453.9M802.0 459.6V456.0M803.0 457.5V454.2M805.0 460.1V453.8M806.0 459.9V457.7M808.0 459.2V452.6M810.0 459.5V453.6M813.0 459.0V452.7M817.0 459.7V457.2M819.0 459.0V456.7M820.0 458.4V455.2M821.0 459.7V453.1M823.0 460.0V450.6M825.0 458.8V452.6M829.0 459.1V456.4M830.0 458.6V451.9M834.0 458.9V454.1M835.0 459.1V454.5M837.0 458.9V456.1M840.0 458.7V454.4M841.0 458.8V451.4M842.0 459.8V453.4M845.0 459.9V457.7M848.0 459.7V454.7M853.0 459.2V456.2M856.0 459.7V454.6M864.0 459.2V454.9M868.0 458.5V453.5M871.0 459.2V452.9M872.0 459.4V453.9M873.0 458.5V453.1M874.0 459.2V452.4M878.0 459.4V452.7M879.0 459.1V456.6M880.0 458.6V447.9M887.0 458.4V451.7M894.0 458.9V454.4M895.0 458.3V454.8M898.0 458.7V455.4M899.0 457.2V454.2M905.0 458.4V451.7M909.0 458.4V447.6M912.0 457.9V454.2M919.0 458.2V453.2M920.0 458.7V456.3M921.0 457.0V451.5M922.0 458.3V453.2M925.0 458.5V454.9M926.0 458.4V452.2M933.0 458.4V455.4M938.0 458.5V456.4M939.0 458.3V454.5M940.0 456.5V454.2M942.0 458.1V452.2M944.0 458.3V453.4M945.0 458.3V451.7M952.0 457.9V451.4M953.0 457.2V454.2M955.0 456.8V452.4M956.0 457.5V452.2M960.0 458.1V451.2M961.0 457.7V451.1M963.0 457.9V452.2M964.0 456.4V450.4M968.0 457.7V453.0M970.0 457.3V452.1M973.0 457.4V449.5M975.0 457.2V451.7M981.0 457.1V454.6M984.0 457.3V454.2M988.0 454.7V450.0M990.0 456.2V453.1M991.0 457.0V451.4M993.0 457.0V453.7M996.0 456.8V454.7M1000.0 455.3V448.6M1006.0 455.9V453.5M1007.0 454.8V445.1M1008.0 456.4V447.5M1009.0 456.5V452.6M1010.0 456.4V452.5M1012.0 455.4V453.3M1014.0 455.5V452.4M1015.0 456.0V447.4M1016.0 455.9V450.2M1018.0 455.1V452.2M1019.0 456.1V449.5M1021.0 455.7V448.7M1022.0 455.5V450.2M1030.0 454.6V447.9M1032.0 454.4V448.2M1033.0 454.6V447.8M1035.0 454.7V449.7M1039.0 454.9V449.9M1042.0 453.4V451.3M1045.0 454.9V449.6M1048.0 455.0V451.2M1052.0 453.4V449.3M1054.0 454.9V449.6M1055.0 454.5V451.2M1058.0 454.6V450.2M1063.0 453.8V451.8M1064.0 454.6V452.6M1065.0 454.7V451.4M1066.0 454.5V447.8M1068.0 453.6V451.4M1074.0 453.3V447.8M1075.0 454.2V448.9M1077.0 453.9V449.8M1080.0 453.8V448.5" stroke-width="1.2"/>
<path d="M130.5 435.6V465.3M142.9 407.0V465.2M145.5 287.9V486.0M156.2 404.4V465.2M178.2 465.2V487.3M198.2 435.6V465.2M210.3 390.8V465.2M227.0 465.1V475.0M229.4 369.4V486.0M233.5 465.1V484.5M253.7 427.8V465.1M256.6 441.3V465.1M264.4 426.1V465.1M282.3 389.6V465.1M307.8 389.6V465.0M310.7 335.3V487.0M336.4 388.4V465.0M349.8 430.1V465.0M352.6 433.0V465.0M362.2 419.4V465.0M389.0 392.7V464.9M393.2 298.8V486.0M416.1 433.2V464.9M428.5 464.9V487.5M441.8 370.7V464.9M444.7 464.9V485.5M463.6 302.8V487.5M470.1 330.0V487.5M494.7 392.7V464.8M519.0 422.4V485.5M539.1 425.2V464.6M545.9 388.5V464.6M548.7 251.3V485.5M552.7 464.6V487.5M571.6 421.0V464.5M594.8 464.4V485.5M597.7 406.0V464.4M607.0 464.4V487.5M620.6 437.4V464.3M624.5 404.6V464.3M627.4 383.4V487.5M642.0 464.2V474.7M658.7 464.2V485.5M679.0 401.8V464.1M705.9 330.0V485.5M729.1 389.9V463.9M777.7 385.6V463.7M782.0 301.6V485.5M804.9 431.7V463.5M826.4 385.6V463.2M830.3 403.2V463.2M850.7 305.6V485.5M857.5 336.7V484.6M867.7 462.7V474.0M873.9 389.9V462.6M879.3 403.2V462.5M899.3 462.2V472.5M903.6 462.1V480.4M920.8 385.4V461.9M930.5 273.4V487.0M952.5 461.4V486.0M968.3 385.4V460.9M974.0 460.7V486.0M975.2 416.7V460.7M986.0 423.2V460.3M1000.8 371.7V484.0M1021.3 385.4V459.2M1026.7 417.8V459.0M1032.1 297.1V487.0M1040.0 425.7V458.6M1045.8 384.3V458.4M1069.9 256.4V487.0M1089.0 366.3V450.0M1103.8 414.9V450.0M1121.4 186.2V484.0M1130.8 367.4V450.0M1135.1 385.4V440.0M1148.4 412.0V440.0M1156.7 423.2V440.0M1161.0 251.4V486.0M1164.6 282.4V484.0M1168.9 245.6V481.5M1172.9 354.4V440.0M1184.8 395.0V440.0M1191.6 395.0V440.0" stroke-width="1.35"/>
<path d="M283.4 430.0V465.1" stroke-width="2.4"/><path d="M454.0 434.6V464.9" stroke-width="2.0"/><path d="M468.8 426.0V464.8" stroke-width="2.4"/><path d="M677.6 416.7V464.1" stroke-width="2.0"/><path d="M778.7 421.0V463.7" stroke-width="2.4"/><path d="M891.1 462.3V487.5" stroke-width="2.6"/><path d="M928.3 426.4V461.8" stroke-width="2.4"/><path d="M979.5 423.9V460.6" stroke-width="2.4"/><path d="M1067.6 398.7V457.7" stroke-width="2.4"/><path d="M1163.6 382.5V440.0" stroke-width="2.4"/><path d="M1167.9 406.0V440.0" stroke-width="2.4"/><path d="M1196.0 427.5V440.0" stroke-width="1.9"/>
</g>
<rect x="101.5" y="93.8" width="1096.5" height="395.7" fill="none" stroke="#222" stroke-width="2.6"/>
<g font-family="Liberation Sans, sans-serif" font-size="14.9" fill="#111"><text x="94" y="98.5" text-anchor="end">317.68</text><text x="94" y="126.3" text-anchor="end">296.50</text><text x="94" y="152.7" text-anchor="end">275.33</text><text x="94" y="179.1" text-anchor="end">254.15</text><text x="94" y="205.5" text-anchor="end">232.97</text><text x="94" y="231.9" text-anchor="end">211.79</text><text x="94" y="258.3" text-anchor="end">190.61</text><text x="94" y="284.7" text-anchor="end">169.43</text><text x="94" y="311.1" text-anchor="end">148.25</text><text x="94" y="337.5" text-anchor="end">127.07</text><text x="94" y="363.9" text-anchor="end">105.89</text><text x="94" y="390.2" text-anchor="end">84.72</text><text x="94" y="416.6" text-anchor="end">63.54</text><text x="94" y="443.0" text-anchor="end">42.36</text><text x="94" y="469.4" text-anchor="end">21.18</text><text x="94" y="494.8" text-anchor="end">0.00</text><text x="99.8" y="511" text-anchor="middle">1111</text><text x="222.6" y="511" text-anchor="middle">868227340</text><text x="344.5" y="511" text-anchor="middle">1736453568</text><text x="466.3" y="511" text-anchor="middle">2604679797</text><text x="588.2" y="511" text-anchor="middle">3472906025</text><text x="710.0" y="511" text-anchor="middle">4341132254</text><text x="831.8" y="511" text-anchor="middle">5209358482</text><text x="953.7" y="511" text-anchor="middle">6077584711</text><text x="1075.5" y="511" text-anchor="middle">6945810939</text><text x="1197.4" y="511" text-anchor="middle">7814037168</text>
<text x="649.6" y="537.8" text-anchor="middle" font-size="18.3">LBA</text></g>
<text x="634.5" y="77.4" text-anchor="middle" font-family="Liberation Serif, serif" font-weight="bold" font-size="21.4" fill="#111">WRITE - Access time (msec vs. LBA)</text>
</svg>
<div id="tbl" class="abs">
<div class="vl" style="left:42px;top:0;height:33px"></div><div class="vl" style="left:42px;top:33px;height:226px;background:#f0f0f0"></div><div class="vl" style="left:166px;top:0;height:33px"></div><div class="vl" style="left:166px;top:33px;height:226px;background:#f0f0f0"></div><div class="vl" style="left:275px;top:0;height:33px"></div><div class="vl" style="left:275px;top:33px;height:226px;background:#f0f0f0"></div><div class="vl" style="left:349px;top:0;height:33px"></div><div class="vl" style="left:349px;top:33px;height:226px;background:#f0f0f0"></div><div class="vl" style="left:437px;top:0;height:33px"></div><div class="vl" style="left:437px;top:33px;height:226px;background:#f0f0f0"></div><div class="vl" style="left:502px;top:0;height:33px"></div><div class="vl" style="left:502px;top:33px;height:226px;background:#f0f0f0"></div><div class="hl" style="top:55px"></div><div class="hl" style="top:78px"></div><div class="hl" style="top:101px"></div><div class="hl" style="top:124px"></div><div class="hl" style="top:147px"></div><div class="hl" style="top:170px"></div><div class="hl" style="top:193px"></div><div class="hl" style="top:216px"></div><div class="hl" style="top:239px"></div><div style="position:absolute;left:7px;top:125.5px;width:743px;height:21.8px;background:#0078d7;border-top:1px dotted #f2a45c;border-left:1px dotted #f2a45c;box-sizing:border-box"></div><div class="vl" style="left:42px;top:126px;height:22px;background:#d9ebf9"></div><div class="vl" style="left:166px;top:126px;height:22px;background:#d9ebf9"></div><div class="vl" style="left:275px;top:126px;height:22px;background:#d9ebf9"></div><div class="vl" style="left:349px;top:126px;height:22px;background:#d9ebf9"></div><div class="vl" style="left:437px;top:126px;height:22px;background:#d9ebf9"></div><div class="vl" style="left:502px;top:126px;height:22px;background:#d9ebf9"></div><div class="c" style="left:10.0px;top:8.6px;">No</div><div class="c" style="left:50.5px;top:8.6px;">CERT Command</div><div class="c ctr" style="left:220.5px;top:8.6px;">Status</div><div class="c ctr" style="left:312.0px;top:8.6px;">%</div><div class="c ctr" style="left:393.0px;top:8.6px;">Info</div><div class="c ctr" style="left:469.5px;top:8.6px;">OnError</div><div class="c" style="left:511.0px;top:8.6px;">Settings</div><div class="c" style="left:10.0px;top:37.6px;">0</div><div class="c" style="left:50.5px;top:37.6px;">Test Unit Ready</div><div class="c ctr" style="left:220.5px;top:37.6px;">pass</div><div class="c ctr" style="left:312.0px;top:37.6px;">100%</div><div class="c ctr" style="left:469.5px;top:37.6px;">FAIL</div><div class="c" style="left:511.0px;top:37.6px;">do_spin=AUTO, onFmtCorrupt=FAIL, onNotReady=FAIL</div><div class="c" style="left:10.0px;top:60.6px;">1</div><div class="c" style="left:50.5px;top:60.6px;">Get Temperature</div><div class="c ctr" style="left:220.5px;top:60.6px;">pass</div><div class="c ctr" style="left:312.0px;top:60.6px;">100%</div><div class="c ctr" style="left:393.0px;top:60.6px;">31'C</div><div class="c ctr" style="left:469.5px;top:60.6px;">CONT</div><div class="c" style="left:511.0px;top:60.6px;">mode=DEFAULT</div><div class="c" style="left:10.0px;top:83.6px;">2</div><div class="c" style="left:50.5px;top:83.6px;">Check G-List</div><div class="c ctr" style="left:220.5px;top:83.6px;">pass</div><div class="c ctr" style="left:312.0px;top:83.6px;">100%</div><div class="c ctr" style="left:393.0px;top:83.6px;">0</div><div class="c ctr" style="left:469.5px;top:83.6px;">CONT</div><div class="c" style="left:511.0px;top:83.6px;">mode=USER, max_defects=65536, type=ALL</div><div class="c" style="left:10.0px;top:106.6px;">3</div><div class="c" style="left:50.5px;top:106.6px;">Read Logical</div><div class="c ctr" style="left:220.5px;top:106.6px;">pass</div><div class="c ctr" style="left:312.0px;top:106.6px;">100%</div><div class="c ctr" style="left:393.0px;top:106.6px;">0</div><div class="c ctr" style="left:469.5px;top:106.6px;">FAIL</div><div class="c" style="left:511.0px;top:106.6px;">mode=SEQUENTIAL, range=[0..3907018584]</div><div class="c" style="left:10.0px;top:129.6px;color:#fff;">4</div><div class="c" style="left:50.5px;top:129.6px;color:#fff;">Write Logical</div><div class="c ctr" style="left:220.5px;top:129.6px;color:#fff;">pass</div><div class="c ctr" style="left:312.0px;top:129.6px;color:#fff;">100%</div><div class="c ctr" style="left:393.0px;top:129.6px;color:#fff;">0</div><div class="c ctr" style="left:469.5px;top:129.6px;color:#fff;">FAIL</div><div class="c" style="left:511.0px;top:129.6px;color:#fff;">mode=SEQUENTIAL, range=[1111..7814037168]</div><div class="c" style="left:10.0px;top:152.6px;">5</div><div class="c" style="left:50.5px;top:152.6px;">Write Logical</div><div class="c ctr" style="left:220.5px;top:152.6px;">pass</div><div class="c ctr" style="left:312.0px;top:152.6px;">100%</div><div class="c ctr" style="left:393.0px;top:152.6px;">0</div><div class="c ctr" style="left:469.5px;top:152.6px;">FAIL</div><div class="c" style="left:511.0px;top:152.6px;">mode=SEQUENTIAL, range=[0..7814037168]</div><div class="c" style="left:10.0px;top:175.6px;">6</div><div class="c" style="left:50.5px;top:175.6px;">Write Logical</div><div class="c ctr" style="left:220.5px;top:175.6px;">RUNNING</div><div class="c ctr" style="left:312.0px;top:175.6px;">88.98%</div><div class="c ctr" style="left:393.0px;top:175.6px;">0</div><div class="c ctr" style="left:469.5px;top:175.6px;">FAIL</div><div class="c" style="left:511.0px;top:175.6px;">mode=SEQUENTIAL, range=[11111..7814037168]</div><div class="c" style="left:10.0px;top:198.6px;">7</div><div class="c" style="left:50.5px;top:198.6px;">Start/Stop</div><div class="c ctr" style="left:469.5px;top:198.6px;">FAIL</div><div class="c" style="left:511.0px;top:198.6px;">mode=STOP, immediate=NO, onFmtCorrupt=FAIL</div><div class="c" style="left:10.0px;top:221.6px;">8</div><div class="c" style="left:50.5px;top:221.6px;">Read Logical</div><div class="c ctr" style="left:469.5px;top:221.6px;">FAIL</div><div class="c" style="left:511.0px;top:221.6px;">mode=SEQUENTIAL, range=[0..3907018584]</div><div style="position:absolute;left:0;top:259px;width:749px;height:23px;background:#f0f0f0"></div><div style="position:absolute;left:25px;top:260px;width:359px;height:20px;background:#cdcdcd"></div><svg style="position:absolute;left:7px;top:263px" width="12" height="14" viewBox="0 0 12 14"><path d="M8.5 2L3 7L8.5 12" stroke="#505050" stroke-width="2.6" fill="none"/></svg><svg style="position:absolute;left:730px;top:263px" width="12" height="14" viewBox="0 0 12 14"><path d="M3.5 2L9 7L3.5 12" stroke="#505050" stroke-width="2.6" fill="none"/></svg>
</div>
<div class="btn dis" style="left:788px;top:567px;width:99px;height:28px;line-height:27px"><span>Add Task</span></div><div class="btn dis" style="left:784px;top:605px;width:99px;height:28px;line-height:27px"><span>Remove Task</span></div><div class="btn dis" style="left:784px;top:655px;width:99px;height:28px;line-height:27px"><span>Load Script</span></div><div class="btn dis" style="left:784px;top:688px;width:99px;height:28px;line-height:27px"><span>Save Script</span></div><div class="btn dis" style="left:784px;top:754px;width:99px;height:28px;line-height:27px"><span>Save All Data</span></div><div class="btn dis" style="left:784px;top:788px;width:99px;height:28px;line-height:27px"><span>Save Report</span></div><div class="btn" style="left:906px;top:567px;width:69px;height:63px;line-height:62px"><span>STOP</span></div><div class="btn" style="left:987px;top:567px;width:38px;height:28px;line-height:27px"><span>||</span></div><div class="btn" style="left:1159px;top:567px;width:89px;height:28px;line-height:27px"><span>Save Graph</span></div><div class="btn" style="left:1159px;top:600px;width:89px;height:28px;line-height:27px"><span>Show Log</span></div><div class="btn" style="left:1048px;top:820px;width:111px;height:30px;line-height:29px"><span style="letter-spacing:-0.25px">Temperature</span></div><div class="btn dis" style="left:1179px;top:820px;width:69px;height:30px;line-height:29px"><span>Exit</span></div><div class="cb" style="left:1066.6px;top:576.1px"><svg width="18" height="18" viewBox="0 0 18 18" style="position:absolute;left:-1.3px;top:-1.3px"><path d="M2.3 9.2L6.8 13.1L15.3 4.4" stroke="#3c3c3c" stroke-width="1.7" fill="none"/></svg></div><div class="lbl" style="left:1089.0px;top:576.7px">Show</div><div class="cb" style="left:1066.6px;top:611.1px"><svg width="18" height="18" viewBox="0 0 18 18" style="position:absolute;left:-1.3px;top:-1.3px"><path d="M2.3 9.2L6.8 13.1L15.3 4.4" stroke="#3c3c3c" stroke-width="1.7" fill="none"/></svg></div><div class="lbl" style="left:1089.0px;top:611.7px">Grid</div><div class="cb" style="left:782.3px;top:831.0px"><svg width="18" height="18" viewBox="0 0 18 18" style="position:absolute;left:-1.3px;top:-1.3px"><path d="M2.3 9.2L6.8 13.1L15.3 4.4" stroke="#3c3c3c" stroke-width="1.7" fill="none"/></svg></div><div class="lbl" style="left:805.0px;top:832.0px">Draw Errors</div><div class="cb" style="left:904.4px;top:831.0px"></div><div class="lbl" style="left:927.5px;top:832.0px">Transfer Mode</div><div class="lbl" style="left:992.0px;top:611.3px">31'C</div><div id="info" class="abs"><div style="left:2.2px;top:3.3px;font-size:13.9px">Class:</div><div style="left:66.2px;top:3.3px">ATA</div><div style="left:2.2px;top:20.8px;font-size:13.9px">Model:</div><div style="left:66.2px;top:20.8px">WDC WD42PURZ-85B4YY0</div><div style="left:2.2px;top:38.2px;font-size:13.9px">S/N:</div><div style="left:66.2px;top:38.2px">WD-WX22DB1RDN07</div><div style="left:2.2px;top:55.6px;font-size:13.9px">FW:</div><div style="left:66.2px;top:55.6px">80.00A80</div><div style="left:2.2px;top:73.1px;font-size:13.9px">LBAs:</div><div style="left:66.2px;top:73.1px">7814037168</div><div style="left:2.2px;top:90.5px;font-size:13.9px">RPM:</div><div style="left:66.2px;top:90.5px">5040</div><div style="left:2.2px;top:108.0px;font-size:13.9px">Sector:</div><div style="left:66.2px;top:108.0px">512b</div><div style="left:131.7px;top:3.3px">Port 00:00</div><div style="left:197.2px;top:73.1px">3.64 TiB</div></div>
<div id="status" class="abs"></div><div class="edge" style="left:0"></div><div class="edge" style="left:1262px"></div>
</div></body></html>
